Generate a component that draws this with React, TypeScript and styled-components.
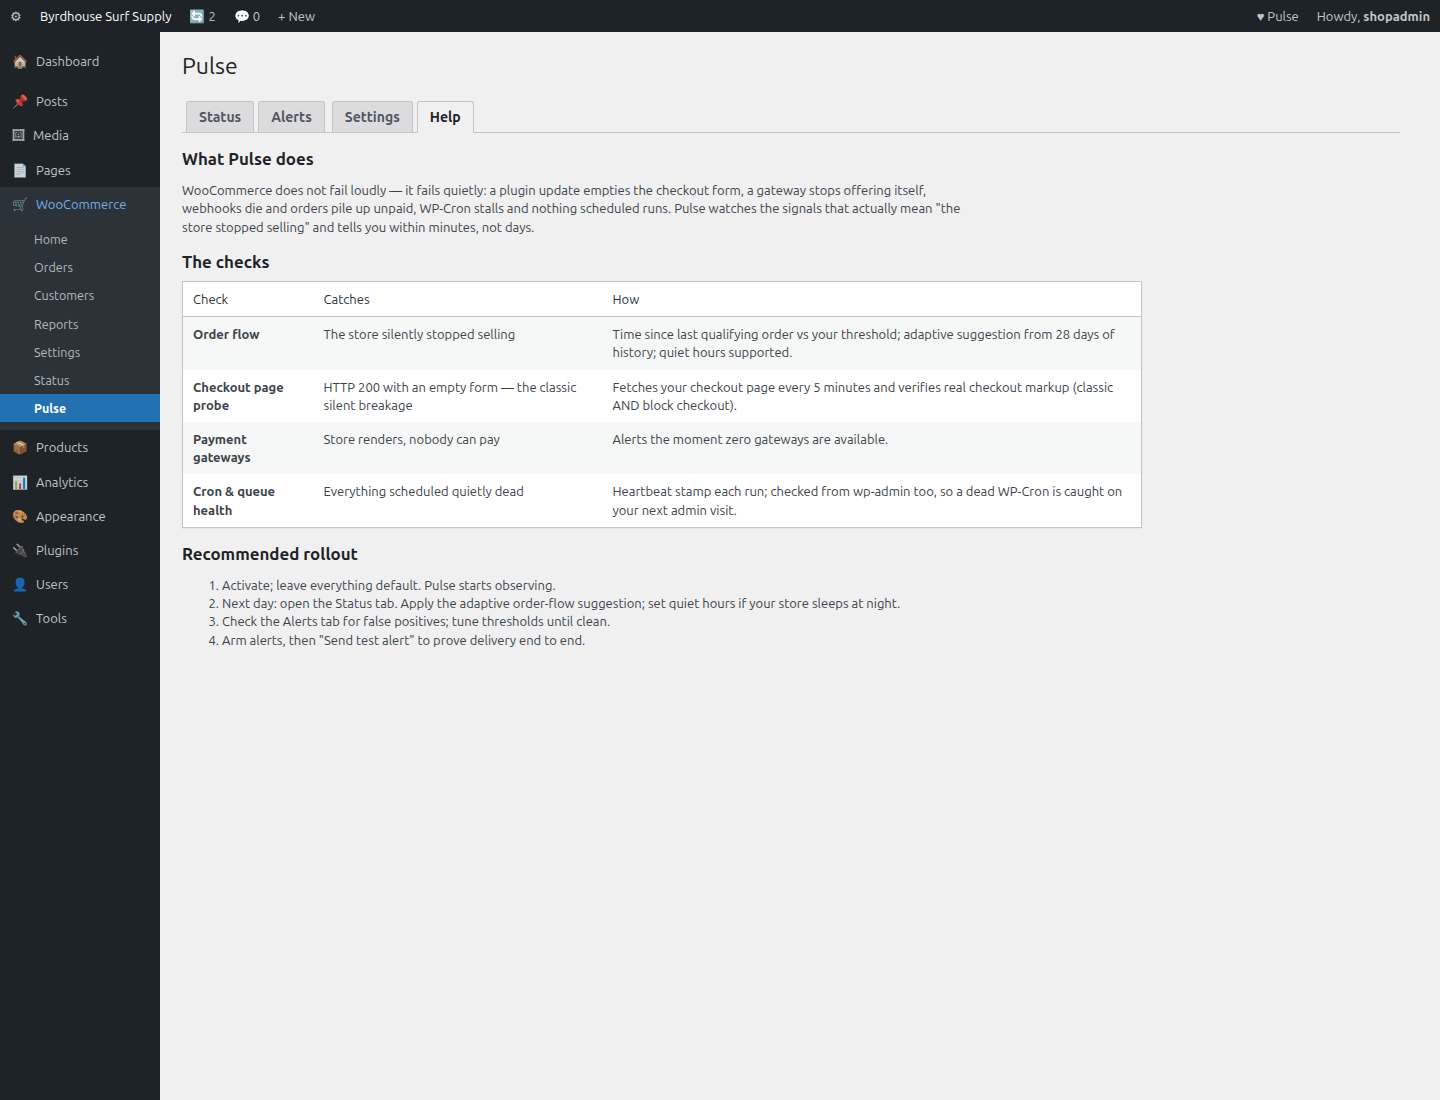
import React from 'react';
import styled, { createGlobalStyle } from 'styled-components';

const GlobalStyle = createGlobalStyle`
  *, *::before, *::after { box-sizing: border-box; }
  body {
    margin: 0;
    background: #f0f0f1;
    color: #3c434a;
    font-family: Ubuntu, "Open Sans", sans-serif;
    font-size: 13px;
    line-height: 18.2px;
  }
`;

const Page = styled.div`
  display: flex;
  flex-direction: column;
  min-height: 100vh;
`;

const AdminBar = styled.header`
  display: flex;
  align-items: center;
  gap: 18px;
  height: 32px;
  padding: 0 10px;
  background: #1d2327;
  color: #c3c4c7;
`;

const BarItem = styled.span<{ $strong?: boolean }>`
  white-space: pre;
  color: ${(p) => (p.$strong ? '#fff' : 'inherit')};
`;

const BarSpacer = styled.div`
  flex: 1;
`;

const UserName = styled.b`
  font-weight: 600;
`;

const Columns = styled.div`
  display: flex;
  flex: 1;
`;

const Sidebar = styled.nav`
  width: 160px;
  flex: none;
  padding-top: 12px;
  background: #1d2327;
`;

const MenuItem = styled.a<{ $current?: boolean; $gapAfter?: boolean }>`
  display: flex;
  gap: 8px;
  padding: 8px 12px;
  margin-bottom: ${(p) => (p.$gapAfter ? '6px' : '0')};
  background: ${(p) => (p.$current ? '#2c3338' : 'transparent')};
  color: ${(p) => (p.$current ? '#72aee6' : '#c3c4c7')};
`;

const MenuIcon = styled.span`
  opacity: 0.8;
`;

const FrameSvg = styled.svg`
  display: block;
  width: 13px;
  height: 12px;
  margin-top: 3px;
`;

const SubMenu = styled.div`
  padding: 4px 0 8px;
  background: #2c3338;
`;

const SubItem = styled.a<{ $active?: boolean }>`
  display: block;
  padding: 5px 12px 5px 34px;
  font-size: 12.5px;
  font-weight: ${(p) => (p.$active ? 600 : 400)};
  background: ${(p) => (p.$active ? '#2271b1' : 'transparent')};
  color: ${(p) => (p.$active ? '#fff' : '#b4b9be')};
`;

const Content = styled.main`
  flex: 1;
  padding: 10px 40px 20px 22px;
`;

const Title = styled.h1`
  margin: 0;
  padding: 9px 0 4px;
  font-size: 23px;
  font-weight: 400;
  line-height: 29.9px;
  color: #1d2327;
`;

const Tabs = styled.div`
  display: flex;
  gap: 4px;
  margin-top: 16px;
  padding-left: 4px;
  border-bottom: 1px solid #c3c4c7;
`;

const Tab = styled.a<{ $active?: boolean; $spaced?: boolean }>`
  padding: 6px 12px;
  margin-left: ${(p) => (p.$spaced ? '3px' : '0')};
  margin-bottom: ${(p) => (p.$active ? '-1px' : '0')};
  border: 1px solid #c3c4c7;
  border-bottom: ${(p) => (p.$active ? '1px solid #f0f0f1' : 'none')};
  border-radius: 3px 3px 0 0;
  background: ${(p) => (p.$active ? '#f0f0f1' : '#dcdcde')};
  color: ${(p) => (p.$active ? '#1d2327' : '#50575e')};
  font-size: 14px;
  font-weight: 600;
`;

const Heading = styled.h2`
  margin: 16.9px 0 10px;
  font-size: 16.9px;
  font-weight: 600;
  color: #1d2327;
`;

const Intro = styled.p`
  max-width: 780px;
  margin: 13px 0;
`;

const CheckTable = styled.table`
  width: 960px;
  table-layout: fixed;
  border: 1px solid #c3c4c7;
  border-spacing: 0;
  background: #fff;
  box-shadow: 0 1px 1px rgba(0, 0, 0, 0.04);
`;

const HeadCell = styled.th<{ $width?: string }>`
  width: ${(p) => p.$width ?? 'auto'};
  padding: 8px 10px;
  border-bottom: 1px solid #c3c4c7;
  text-align: left;
  font-weight: 400;
  color: #2c3338;
`;

const Row = styled.tr`
  &:nth-child(odd) { background: #f6f7f7; }
`;

const Cell = styled.td<{ $bold?: boolean }>`
  padding: 8px 10px;
  vertical-align: top;
  font-weight: ${(p) => (p.$bold ? 600 : 400)};
`;

const Steps = styled.ol`
  margin: 13.2px 0;
  padding-left: 40px;
`;

const FrameIcon = () => (
  <FrameSvg viewBox="0 0 13 12" fill="currentColor" aria-hidden="true">
    <path
      fillRule="evenodd"
      d="M.5 0H3l.5.6.7-.6h1l.6.6.7-.6.7.6.6-.6h1l.7.6.5-.6h2.5v2.4l-.6.5.6.7v.9l-.6.6.6.6v.9l-.6.6.6.6v.9l-.6.5.6.5V12H10l-.5-.6-.7.6h-1l-.6-.6-.7.6-.7-.6-.6.6h-1l-.7-.6L3 12H.5V9.6l.6-.5-.6-.7v-.9l.6-.6-.6-.6v-.9l.6-.6-.6-.6v-.9l.6-.5-.6-.5zM2.5 2v8h8V2z"
    />
    <path
      fillRule="evenodd"
      d="M3.2 2.7h6.6v6.6H3.2zM6.5 3.3c-1.4 0-2.2.9-2.2 2.2 0 1 .3 1.6.9 2.1-.8.2-1.2.6-1.3 1.2h5.2c-.1-.6-.5-1-1.3-1.2.6-.5.9-1.1.9-2.1 0-1.3-.8-2.2-2.2-2.2z"
      opacity=".75"
    />
    <circle cx="6.5" cy="5.4" r="1" />
    <path d="M5 8.6c.2-1 .7-1.5 1.5-1.5S7.800 7.600 8 8.600z" />
  </FrameSvg>
);

type Entry = { icon: React.ReactNode; label: string; gapAfter?: boolean };

const topMenu: Entry[] = [
  { icon: '🏠', label: 'Dashboard', gapAfter: true },
  { icon: '📌', label: 'Posts' },
  { icon: <FrameIcon />, label: 'Media' },
  { icon: '📄', label: 'Pages' },
];

const bottomMenu: Entry[] = [
  { icon: '📦', label: 'Products' },
  { icon: '📊', label: 'Analytics' },
  { icon: '🎨', label: 'Appearance' },
  { icon: '🔌', label: 'Plugins' },
  { icon: '👤', label: 'Users' },
  { icon: '🔧', label: 'Tools' },
];

const subMenu = ['Home', 'Orders', 'Customers', 'Reports', 'Settings', 'Status', 'Pulse'];

const checks = [
  ['Order flow', 'The store silently stopped selling', 'Time since last qualifying order vs your threshold; adaptive suggestion from 28 days of history; quiet hours supported.'],
  ['Checkout page probe', 'HTTP 200 with an empty form — the classic silent breakage', 'Fetches your checkout page every 5 minutes and verifies real checkout markup (classic AND block checkout).'],
  ['Payment gateways', 'Store renders, nobody can pay', 'Alerts the moment zero gateways are available.'],
  ['Cron & queue health', 'Everything scheduled quietly dead', 'Heartbeat stamp each run; checked from wp-admin too, so a dead WP-Cron is caught on your next admin visit.'],
];

const steps = [
  'Activate; leave everything default. Pulse starts observing.',
  'Next day: open the Status tab. Apply the adaptive order-flow suggestion; set quiet hours if your store sleeps at night.',
  'Check the Alerts tab for false positives; tune thresholds until clean.',
  'Arm alerts, then "Send test alert" to prove delivery end to end.',
];

const MenuLink = ({ entry, current }: { entry: Entry; current?: boolean }) => (
  <MenuItem $current={current} $gapAfter={entry.gapAfter}>
    <MenuIcon>{entry.icon}</MenuIcon>
    <span>{entry.label}</span>
  </MenuItem>
);

export default function App() {
  return (
    <Page>
      <GlobalStyle />
      <AdminBar>
        <BarItem>⚙</BarItem>
        <BarItem $strong>Byrdhouse Surf Supply</BarItem>
        <BarItem>🔄 2</BarItem>
        <BarItem>💬 0</BarItem>
        <BarItem>+ New</BarItem>
        <BarSpacer />
        <BarItem>♥ Pulse</BarItem>
        <BarItem>Howdy, <UserName>shopadmin</UserName></BarItem>
      </AdminBar>
      <Columns>
        <Sidebar>
          {topMenu.map((e) => <MenuLink key={e.label} entry={e} />)}
          <MenuLink entry={{ icon: '🛒', label: 'WooCommerce' }} current />
          <SubMenu>
            {subMenu.map((s) => <SubItem key={s} $active={s === 'Pulse'}>{s}</SubItem>)}
          </SubMenu>
          {bottomMenu.map((e) => <MenuLink key={e.label} entry={e} />)}
        </Sidebar>
        <Content>
          <Title>Pulse</Title>
          <Tabs>
            <Tab>Status</Tab>
            <Tab>Alerts</Tab>
            <Tab $spaced>Settings</Tab>
            <Tab $active>Help</Tab>
          </Tabs>
          <Heading>What Pulse does</Heading>
          <Intro>
            WooCommerce does not fail loudly — it fails quietly: a plugin update empties the checkout form, a
            gateway stops offering itself, webhooks die and orders pile up unpaid, WP-Cron stalls and nothing
            scheduled runs. Pulse watches the signals that actually mean "the store stopped selling" and tells
            you within minutes, not days.
          </Intro>
          <Heading>The checks</Heading>
          <CheckTable>
            <thead>
              <tr>
                <HeadCell $width="130.5px">Check</HeadCell>
                <HeadCell $width="289px">Catches</HeadCell>
                <HeadCell>How</HeadCell>
              </tr>
            </thead>
            <tbody>
              {checks.map(([name, catches, how]) => (
                <Row key={name}>
                  <Cell $bold>{name}</Cell>
                  <Cell>{catches}</Cell>
                  <Cell>{how}</Cell>
                </Row>
              ))}
            </tbody>
          </CheckTable>
          <Heading>Recommended rollout</Heading>
          <Steps>
            {steps.map((s) => <li key={s}>{s}</li>)}
          </Steps>
        </Content>
      </Columns>
    </Page>
  );
}
